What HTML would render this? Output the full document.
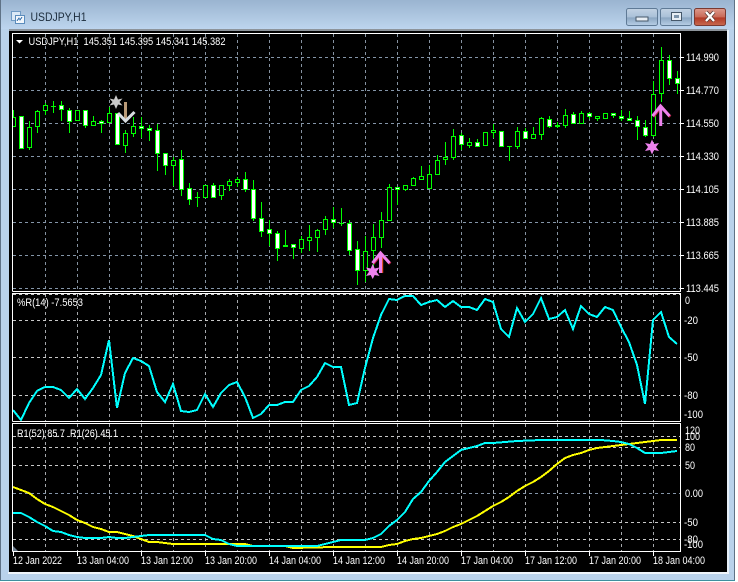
<!DOCTYPE html>
<html><head><meta charset="utf-8"><title>USDJPY,H1</title>
<style>
html,body{margin:0;padding:0;background:#fff;width:738px;height:582px;overflow:hidden}
svg{display:block}
text{font-family:"Liberation Sans",sans-serif;font-size:11px;fill:#fff}
.c{shape-rendering:crispEdges}
</style></head><body>
<svg width="738" height="582" viewBox="0 0 738 582" xmlns="http://www.w3.org/2000/svg">
<defs>
<linearGradient id="t" x1="0" y1="0" x2="0" y2="1"><stop offset="0" stop-color="#9ab4d0"/><stop offset="1" stop-color="#bdd5ee"/></linearGradient>
<linearGradient id="b" x1="0" y1="0" x2="0" y2="1"><stop offset="0" stop-color="#c3d3e4"/><stop offset=".5" stop-color="#a9c0d8"/><stop offset=".55" stop-color="#8ba6c2"/><stop offset="1" stop-color="#b8cfe6"/></linearGradient>
<linearGradient id="r" x1="0" y1="0" x2="0" y2="1"><stop offset="0" stop-color="#dc9a8c"/><stop offset=".5" stop-color="#c96a58"/><stop offset=".55" stop-color="#b23a26"/><stop offset="1" stop-color="#c86a50"/></linearGradient>
</defs>
<rect width="738" height="582" fill="#fff"/>
<rect x="0" y="0" width="735" height="581" rx="3" fill="#b9d2eb"/>
<rect x="1" y="0" width="733" height="29" fill="url(#t)"/>
<rect x="0" y="0" width="1" height="581" fill="#5f7286"/>
<rect x="734" y="0" width="1" height="581" fill="#5f7286"/>
<rect x="0" y="580" width="735" height="1" fill="#3f8f9f"/>
<rect x="9" y="29" width="718" height="2" fill="#8d949b"/>
<rect x="9" y="31" width="718" height="541" fill="#000"/>
<rect x="727" y="30" width="2" height="544" fill="#e6eff8"/>
<rect x="8" y="572" width="721" height="2" fill="#eef4fa"/>

<!-- title -->
<g class="c" stroke-width="1">
<rect x="11.5" y="11.5" width="9" height="9" fill="#dbe9f6" stroke="#6f9ac4"/>
<rect x="15.5" y="15.5" width="9" height="8" fill="#f2f7fc" stroke="#5b8cbc"/>
<path d="M17 21l2-3 1 2 2-3" fill="none" stroke="#4a7fb5"/>
</g>
<text x="30.5" y="21" textLength="56" lengthAdjust="spacingAndGlyphs" style="font-size:12px;fill:#1c2c3c">USDJPY,H1</text>
<rect x="626.5" y="8.5" width="31" height="17" rx="2" fill="url(#b)" stroke="#5f7a96"/>
<rect x="636" y="17" width="12" height="4" fill="#e8eef4" stroke="#46586a" stroke-width="1" class="c"/>
<rect x="660.5" y="8.5" width="31" height="17" rx="2" fill="url(#b)" stroke="#5f7a96"/>
<rect x="671.5" y="12.5" width="10" height="8" fill="#e8eef4" stroke="#46586a" stroke-width="1" class="c"/>
<rect x="674" y="15" width="5" height="3" fill="#7d94ab" class="c"/>
<rect x="694.5" y="8.5" width="31" height="17" rx="2" fill="url(#r)" stroke="#7a3a32"/>
<path d="M706 12l8 9M714 12l-8 9" stroke="#46302c" stroke-width="3.6" fill="none"/>
<path d="M706 12l8 9M714 12l-8 9" stroke="#fff" stroke-width="2.4" fill="none"/>

<!-- grid -->
<g class="c" fill="none" stroke-width="1" stroke-dasharray="3 3">
<path stroke="#8592a0" d="M45.5 34V291M77.5 34V291M109.5 34V291M141.5 34V291M173.5 34V291M205.5 34V291M237.5 34V291M269.5 34V291M301.5 34V291M333.5 34V291M365.5 34V291M397.5 34V291M429.5 34V291M461.5 34V291M493.5 34V291M525.5 34V291M557.5 34V291M589.5 34V291M621.5 34V291M653.5 34V291"/>
<path stroke="#8495a8" d="M13 57.5H680M13 90.5H680M13 123.5H680M13 156.5H680M13 189.5H680M13 222.5H680M13 255.5H680M13 288.5H680"/>
<path stroke="#a5a8ac" d="M45.5 294V421M77.5 294V421M109.5 294V421M141.5 294V421M173.5 294V421M205.5 294V421M237.5 294V421M269.5 294V421M301.5 294V421M333.5 294V421M365.5 294V421M397.5 294V421M429.5 294V421M461.5 294V421M493.5 294V421M525.5 294V421M557.5 294V421M589.5 294V421M621.5 294V421M653.5 294V421"/>
<path stroke="#c8c8c8" d="M13 294.5H680M13 320.5H680M13 357.5H680M13 395.5H680"/>
<path stroke="#a5a8ac" d="M45.5 424V551M77.5 424V551M109.5 424V551M141.5 424V551M173.5 424V551M205.5 424V551M237.5 424V551M269.5 424V551M301.5 424V551M333.5 424V551M365.5 424V551M397.5 424V551M429.5 424V551M461.5 424V551M493.5 424V551M525.5 424V551M557.5 424V551M589.5 424V551M621.5 424V551M653.5 424V551"/>
<path stroke="#c8c8c8" d="M13 436.5H680M13 447.5H680M13 465.5H680M13 522.5H680M13 539.5H680"/>
<path stroke="#8495a8" d="M13 493.5H680"/>
</g>

<!-- wicks -->
<path class="c" fill="none" stroke="#0f0" stroke-width="1" d="M13.5 110V127M21.5 116V149M29.5 121V150M37.5 110V133M45.5 103V115M53.5 101V113M61.5 101V121M69.5 108V133M77.5 110V121M85.5 110V128M93.5 116V125M101.5 120V133M109.5 107V123M117.5 113V144M125.5 130V153M133.5 117V137M141.5 117V138M149.5 125V141M157.5 124V171M165.5 153V175M173.5 157V186M181.5 150V196M189.5 183V205M197.5 192V207M205.5 185V198M213.5 183V197M221.5 185V200M229.5 179V191M237.5 177V187M245.5 172V192M253.5 180V221M261.5 202V237M269.5 220V246M277.5 231V261M285.5 230V247M293.5 244V259M301.5 236V253M309.5 225V251M317.5 229V252M325.5 216V235M333.5 207V228M341.5 208V226M349.5 220V255M357.5 241V285M365.5 236V282M373.5 224V268M381.5 212V248M389.5 184V221M397.5 187V205M405.5 185V191M413.5 177V186M421.5 166V180M429.5 165V189M437.5 155V175M445.5 142V165M453.5 129V160M461.5 133V150M469.5 138V148M477.5 139V147M485.5 132V146M493.5 124V138M501.5 131V146M509.5 146V161M517.5 127V149M525.5 128V139M533.5 127V138M541.5 117V140M549.5 116V128M557.5 122V128M565.5 109V128M573.5 112V124M581.5 111V123M589.5 112V119M597.5 116V121M605.5 113V119M613.5 113V118M621.5 110V121M629.5 111V121M637.5 116V140M645.5 120V137M653.5 81V137M661.5 47V102M669.5 55V85M677.5 71V94"/>
<!-- crosses -->
<path class="c" fill="none" stroke="#0f0" stroke-width="1" d="M51 106.5h5M195 197.5h5M339 223.5h5M507 146.5h5"/>
<!-- hollow bodies -->
<path class="c" fill="#000" stroke="#0f0" stroke-width="1" d="M27.5 127.5h4v20h-4zM35.5 111.5h4v15h-4zM43.5 105.5h4v5h-4zM75.5 110.5h4v10h-4zM91.5 121.5h4v4h-4zM107.5 113.5h4v9h-4zM123.5 133.5h4v12h-4zM131.5 126.5h4v7h-4zM171.5 160.5h4v5h-4zM203.5 185.5h4v12h-4zM219.5 185.5h4v10h-4zM227.5 181.5h4v4h-4zM235.5 179.5h4v3h-4zM283.5 245.5h4v1h-4zM299.5 239.5h4v9h-4zM307.5 237.5h4v3h-4zM315.5 230.5h4v7h-4zM323.5 219.5h4v10h-4zM363.5 251.5h4v19h-4zM371.5 237.5h4v13h-4zM379.5 220.5h4v17h-4zM387.5 187.5h4v33h-4zM403.5 185.5h4v4h-4zM411.5 178.5h4v7h-4zM419.5 176.5h4v3h-4zM427.5 174.5h4v14h-4zM435.5 160.5h4v14h-4zM443.5 157.5h4v2h-4zM451.5 136.5h4v21h-4zM467.5 142.5h4v3h-4zM483.5 132.5h4v13h-4zM491.5 130.5h4v2h-4zM515.5 131.5h4v15h-4zM531.5 134.5h4v4h-4zM539.5 118.5h4v16h-4zM555.5 125.5h4v1h-4zM563.5 115.5h4v10h-4zM579.5 113.5h4v10h-4zM595.5 116.5h4v2h-4zM603.5 113.5h4v5h-4zM651.5 94.5h4v41h-4zM659.5 60.5h4v33h-4z"/>
<!-- first candle, clipped at the panel border -->
<path class="c" fill="#000" stroke="#0f0" stroke-width="1" d="M13 117.5h2.5v9h-2.5"/>
<!-- white bodies -->
<path class="c" fill="#fff" stroke="#0f0" stroke-width="1" d="M19.5 116.5h4v32h-4zM59.5 105.5h4v4h-4zM67.5 110.5h4v11h-4zM83.5 110.5h4v15h-4zM99.5 121.5h4v2h-4zM115.5 113.5h4v31h-4zM139.5 126.5h4v2h-4zM147.5 128.5h4v2h-4zM155.5 130.5h4v23h-4zM163.5 153.5h4v12h-4zM179.5 159.5h4v30h-4zM187.5 188.5h4v11h-4zM211.5 185.5h4v12h-4zM243.5 179.5h4v10h-4zM251.5 189.5h4v29h-4zM259.5 218.5h4v13h-4zM267.5 229.5h4v4h-4zM275.5 233.5h4v15h-4zM291.5 244.5h4v3h-4zM331.5 219.5h4v3h-4zM347.5 223.5h4v27h-4zM355.5 249.5h4v21h-4zM395.5 187.5h4v2h-4zM459.5 135.5h4v9h-4zM475.5 142.5h4v4h-4zM499.5 131.5h4v15h-4zM523.5 131.5h4v7h-4zM547.5 119.5h4v7h-4zM571.5 114.5h4v9h-4zM587.5 113.5h4v3h-4zM611.5 113.5h4v2h-4zM619.5 116.5h4v2h-4zM627.5 118.5h4v2h-4zM635.5 120.5h4v6h-4zM643.5 127.5h4v8h-4zM667.5 60.5h4v18h-4zM675.5 78.5h4v5h-4z"/>

<!-- markers -->
<polygon points="116,95 118,99.5 122.5,98.5 119.5,102 122.5,105.5 118,104.5 116,109 114,104.5 109.5,105.5 112.5,102 109.5,98.5 114,99.5" fill="#c9c9c9"/>
<path d="M125.5 102V120" stroke="#b99a78" stroke-width="3" fill="none"/>
<path d="M118 113l7.5 8 9-9" stroke="#d8dde2" stroke-width="3" fill="none"/>
<path d="M372.5 263l8-10 9 10" stroke="#c02040" stroke-width="3" fill="none" transform="translate(.7 .7)"/>
<path d="M381.5 254V273" stroke="#e0502a" stroke-width="3.4" fill="none"/>
<path d="M372.5 263l8-10 9 10M380.5 253V273" stroke="#ee82ee" stroke-width="3" fill="none"/>
<polygon points="372.7,264 374.7,268.5 379.5,267.5 376.5,271.7 379.5,276 374.7,275 372.7,279 370.7,275 366,276 369,271.7 366,267.5 370.7,268.5" fill="#ee82ee"/>
<path d="M652.5 116l8-10 9 10" stroke="#c02040" stroke-width="3" fill="none" transform="translate(.7 .7)"/>
<path d="M652.5 116l8-10 9 10M660.7 106V126" stroke="#ee82ee" stroke-width="3" fill="none"/>
<polygon points="652,139.5 654,144 659,143 656,147 659,151 654,150 652,154.5 650,150 645,151 648,147 645,143 650,144" fill="#ee82ee"/>

<!-- indicator lines -->
<polyline class="c" fill="none" stroke="#0ff" stroke-width="2" points="13,410 21,420 29,403 37,391 45,387 53,387 61,390 69,398 77,389 85,399 93,388 101,375 109,340 117,408 125,373 133,358 141,361 149,366 157,392 165,402 173,384 181,411 189,412 197,410 205,394 213,407 221,393 229,385 237,382 245,397 253,418 261,414 269,405 277,405 285,402 293,402 301,390 309,386 317,377 325,363 333,367 341,367 349,405 357,403 365,368 373,338 381,315 389,299 397,300 405,296 413,296 421,305 429,302 437,300 445,307 453,301 461,307 469,307 477,310 485,299 493,302 501,329 509,337 517,308 525,322 533,314 541,298 549,319 557,317 565,310 573,329 581,306 589,314 597,317 605,307 613,310 621,327 629,342 637,365 645,404 653,320 661,312 669,337 677,344"/>
<polyline class="c" fill="none" stroke="#ff0" stroke-width="2" points="13,487 21,490 29,493 37,499 45,504 53,507 61,511 69,515 77,520 85,523 93,527 101,529 109,532 117,532 125,534 133,536 141,539 149,542 157,542 165,543 173,544 245,544 253,546 285,546 293,548 333,547 373,547 381,547 389,545 397,544 405,541 413,539 421,538 429,536 437,534 445,531 453,527 461,524 469,520 477,516 485,511 493,506 501,502 509,497 517,491 525,486 533,482 541,477 549,471 557,464 565,458 573,455 581,453 589,450 597,448 605,447 613,446 621,445 629,444 637,443 645,442 653,441 661,440 669,440 677,440"/>
<polyline class="c" fill="none" stroke="#0ff" stroke-width="2" points="13,513 21,513 29,517 37,522 45,526 53,531 61,532 69,535 77,537 85,538 101,538 109,537 117,538 125,538 133,537 141,536 149,535 205,535 213,539 221,540 229,544 237,546 245,546 317,546 325,544 333,542 341,540 365,540 373,538 381,534 389,526 397,520 405,512 413,499 421,492 429,481 437,472 445,462 453,456 461,450 469,448 477,446 485,443 493,443 517,441 541,440 601,440 613,441 621,442 629,444 637,448 645,453 661,453 669,452 677,451"/>

<!-- panel borders -->
<g class="c" fill="none" stroke="#fff" stroke-width="1">
<path d="M12.5 291.5V33.5H680.5V291.5H12.5"/>
<path d="M12.5 421.5V293.5H680.5V421.5H12.5"/>
<path d="M12.5 551.5V423.5H680.5V551.5H12.5"/>
<path d="M681 57.5h3M681 90.5h3M681 123.5h3M681 156.5h3M681 189.5h3M681 222.5h3M681 255.5h3M681 288.5h3M13.5 551V556M77.5 551V556M141.5 551V556M205.5 551V556M269.5 551V556M333.5 551V556M397.5 551V556M461.5 551V556M525.5 551V556M589.5 551V556M653.5 551V556"/>
</g>
<polygon points="13,546 18,551 13,551" fill="#6f7f90"/>
<polygon points="16,40 23,40 19.5,43.5" fill="#fff"/>

<!-- labels -->
<text x="28.5" y="45" textLength="197" lengthAdjust="spacingAndGlyphs" xml:space="preserve">USDJPY,H1  145.351 145.395 145.341 145.382</text>
<text x="17" y="306" textLength="66" lengthAdjust="spacingAndGlyphs">%R(14) -7.5653</text>
<text x="17" y="437" textLength="101" lengthAdjust="spacingAndGlyphs" xml:space="preserve">R1(52) 85.7  R1(26) 45.1</text>

<g>
<text x="686" y="61" textLength="33" lengthAdjust="spacingAndGlyphs">114.990</text>
<text x="686" y="94" textLength="33" lengthAdjust="spacingAndGlyphs">114.770</text>
<text x="686" y="127" textLength="33" lengthAdjust="spacingAndGlyphs">114.550</text>
<text x="686" y="160" textLength="33" lengthAdjust="spacingAndGlyphs">114.330</text>
<text x="686" y="193" textLength="33" lengthAdjust="spacingAndGlyphs">114.105</text>
<text x="686" y="226" textLength="33" lengthAdjust="spacingAndGlyphs">113.885</text>
<text x="686" y="259" textLength="33" lengthAdjust="spacingAndGlyphs">113.665</text>
<text x="686" y="292" textLength="33" lengthAdjust="spacingAndGlyphs">113.445</text>
<text x="685" y="304" textLength="5" lengthAdjust="spacingAndGlyphs">0</text>
<text x="684" y="324" textLength="14" lengthAdjust="spacingAndGlyphs">-20</text>
<text x="684" y="361" textLength="14" lengthAdjust="spacingAndGlyphs">-50</text>
<text x="684" y="399" textLength="14" lengthAdjust="spacingAndGlyphs">-80</text>
<text x="684" y="418" textLength="19" lengthAdjust="spacingAndGlyphs">-100</text>
<text x="685" y="434" textLength="15" lengthAdjust="spacingAndGlyphs">120</text>
<text x="685" y="440" textLength="15" lengthAdjust="spacingAndGlyphs">100</text>
<text x="685" y="451" textLength="10" lengthAdjust="spacingAndGlyphs">80</text>
<text x="685" y="469" textLength="10" lengthAdjust="spacingAndGlyphs">50</text>
<text x="685" y="497" textLength="18" lengthAdjust="spacingAndGlyphs">0.00</text>
<text x="684" y="526" textLength="14" lengthAdjust="spacingAndGlyphs">-50</text>
<text x="684" y="543" textLength="14" lengthAdjust="spacingAndGlyphs">-80</text>
<text x="684" y="548" textLength="19" lengthAdjust="spacingAndGlyphs">-100</text>
<text x="13" y="564" textLength="49" lengthAdjust="spacingAndGlyphs">12 Jan 2022</text>
<text x="77" y="564" textLength="52" lengthAdjust="spacingAndGlyphs">13 Jan 04:00</text>
<text x="141" y="564" textLength="52" lengthAdjust="spacingAndGlyphs">13 Jan 12:00</text>
<text x="205" y="564" textLength="52" lengthAdjust="spacingAndGlyphs">13 Jan 20:00</text>
<text x="269" y="564" textLength="52" lengthAdjust="spacingAndGlyphs">14 Jan 04:00</text>
<text x="333" y="564" textLength="52" lengthAdjust="spacingAndGlyphs">14 Jan 12:00</text>
<text x="397" y="564" textLength="52" lengthAdjust="spacingAndGlyphs">14 Jan 20:00</text>
<text x="461" y="564" textLength="52" lengthAdjust="spacingAndGlyphs">17 Jan 04:00</text>
<text x="525" y="564" textLength="52" lengthAdjust="spacingAndGlyphs">17 Jan 12:00</text>
<text x="589" y="564" textLength="52" lengthAdjust="spacingAndGlyphs">17 Jan 20:00</text>
<text x="653" y="564" textLength="52" lengthAdjust="spacingAndGlyphs">18 Jan 04:00</text>
</g>
</svg>
</body></html>
